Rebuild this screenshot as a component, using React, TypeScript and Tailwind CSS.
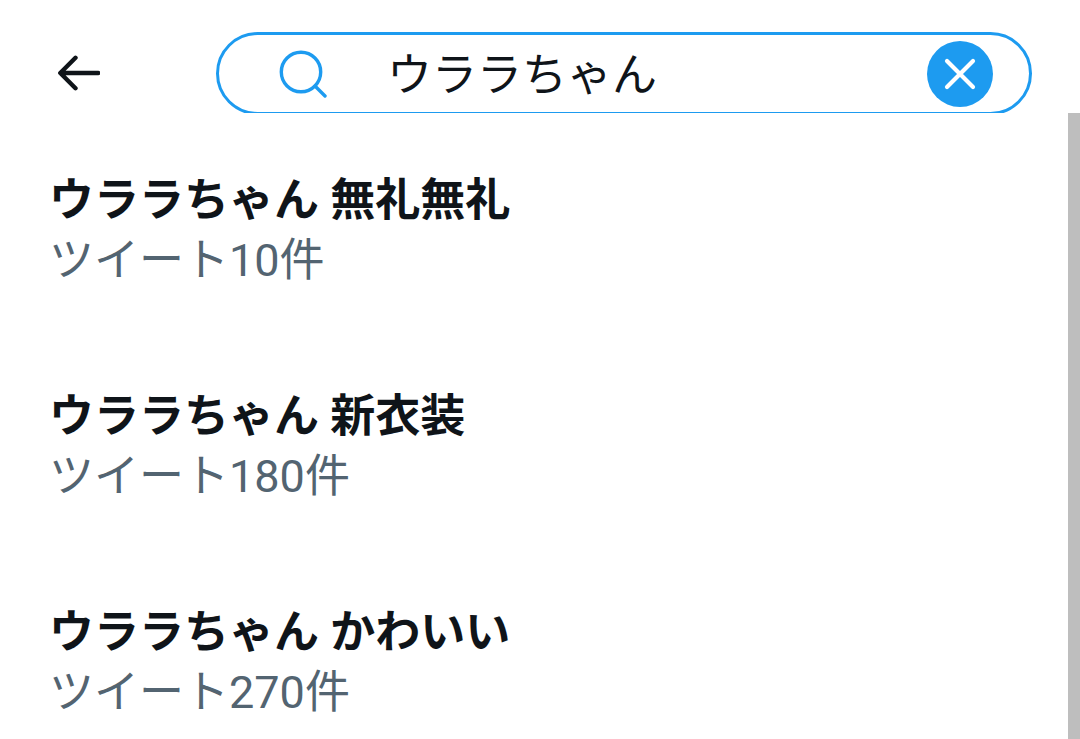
const results = [
  { term: "ウララちゃん 無礼無礼", count: 10 },
  { term: "ウララちゃん 新衣装", count: 180 },
  { term: "ウララちゃん かわいい", count: 270 },
];

function BackIcon() {
  return (
    <svg viewBox="0 0 44 40" className="h-10 w-11" fill="none" stroke="#0f1419" strokeWidth="4.4" strokeLinecap="round" strokeLinejoin="round">
      <path d="M42.3 20H4.5M19.5 4.8L4.3 20l15.2 15.2" />
    </svg>
  );
}

function SearchIcon() {
  return (
    <svg viewBox="0 0 48 48" className="h-12 w-12 shrink-0" fill="none" stroke="#1d9bf0" strokeWidth="3.4">
      <circle cx="22" cy="22" r="19.7" />
      <path d="M36 36l10 10" strokeLinecap="round" />
    </svg>
  );
}

function ClearIcon() {
  return (
    <svg viewBox="0 0 32 32" className="h-8 w-8" fill="none" stroke="#ffffff" strokeWidth="4.2" strokeLinecap="round">
      <path d="M3 3l26 26M29 3L3 29" />
    </svg>
  );
}

export default function App() {
  return (
    <div className="flex h-screen flex-col overflow-hidden bg-white font-['Roboto','Noto_Sans_CJK_JP',sans-serif] text-[#0f1419]">
      <header className="flex h-[113px] shrink-0 items-start overflow-hidden pt-8 pr-12 pl-14">
        <button type="button" aria-label="戻る" className="mr-[116px] flex h-[82px] shrink-0 items-center">
          <BackIcon />
        </button>
        <form role="search" className="flex h-[83px] min-w-0 flex-1 items-center rounded-full border-[3px] border-[#1d9bf0] pr-9 pl-[60px]" onSubmit={(e) => e.preventDefault()}>
          <SearchIcon />
          <input
            type="text"
            aria-label="検索"
            defaultValue="ウララちゃん"
            className="ml-[60px] h-16 min-w-0 flex-1 bg-transparent pt-1 text-[45px] outline-none"
          />
          <button type="button" aria-label="クリア" className="flex size-[66px] shrink-0 items-center justify-center rounded-full bg-[#1d9bf0]">
            <ClearIcon />
          </button>
        </form>
      </header>
      <main className="flex min-h-0 flex-1">
        <ul className="min-w-0 flex-1 pt-[58px]">
          {results.map((r) => (
            <li key={r.term} className="mb-24 px-[49px]">
              <a href="#" className="block text-[45px] leading-[60px]">
                <span className="block font-bold">{r.term}</span>
                <span className="block text-[#536471]">ツイート{r.count}件</span>
              </a>
            </li>
          ))}
        </ul>
        <div className="w-3 bg-[#bebebe]" />
      </main>
    </div>
  );
}
